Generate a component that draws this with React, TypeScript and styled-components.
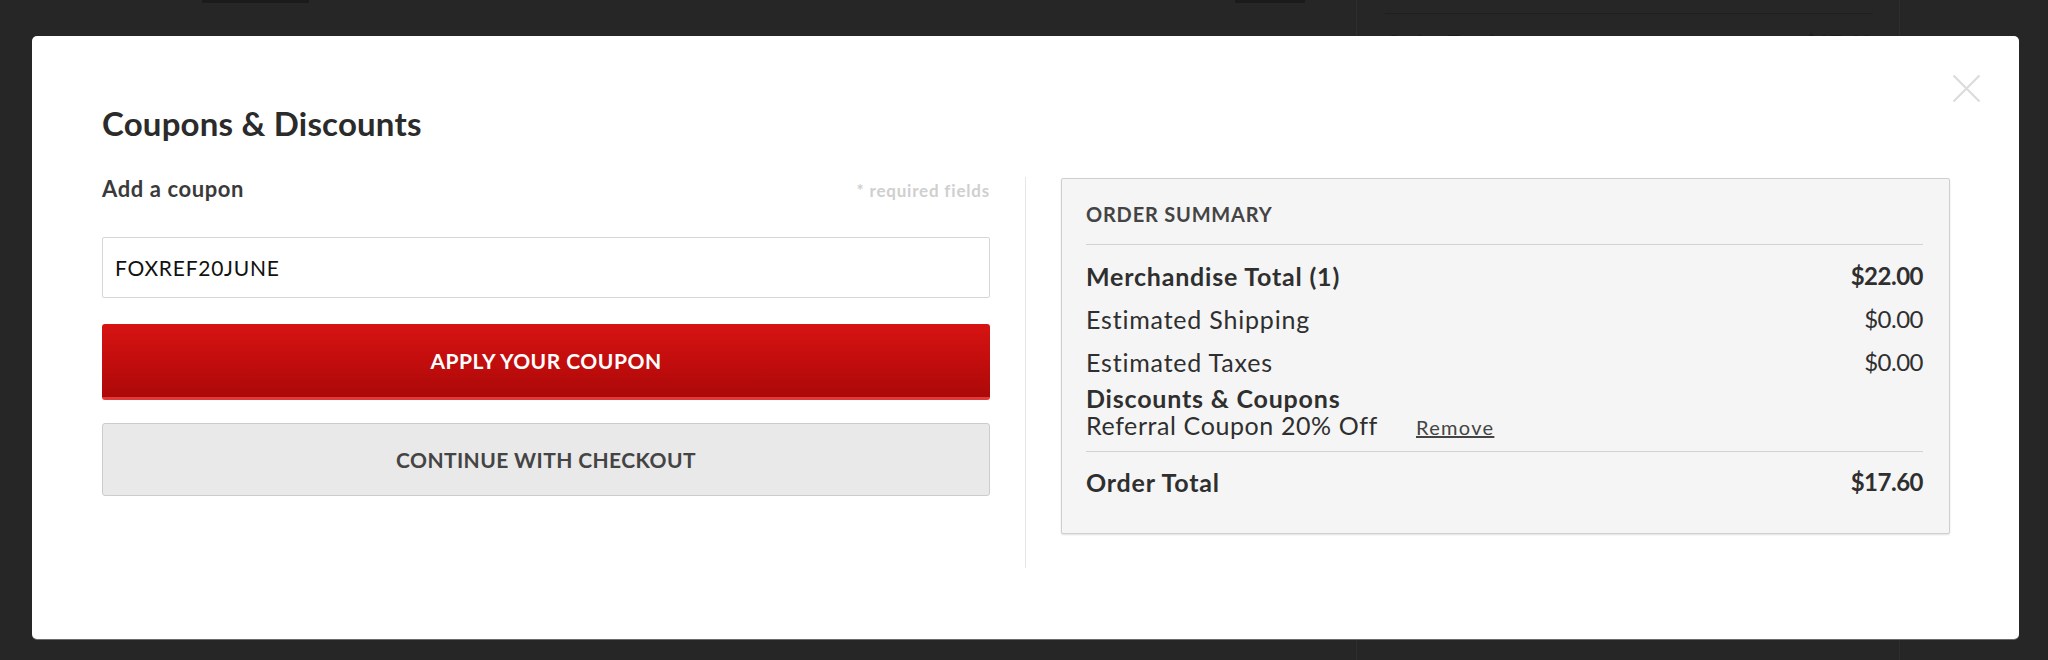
import React from "react";
import styled, { createGlobalStyle } from "styled-components";

const GlobalStyle = createGlobalStyle`
  html, body {
    margin: 0;
    padding: 0;
    background: #262626;
    font-family: Lato, "Open Sans", Arial, sans-serif;
    overflow: hidden;
  }
  * { box-sizing: border-box; }
`;

/* ---------- faded page behind the overlay ---------- */
const Page = styled.div`
  position: relative;
  height: 660px;
  display: flex;
  background: #262626;
`;

const PageMain = styled.div`
  width: 1356px;
  display: flex;
  gap: 926px;
  padding-left: 202px;
`;

const PageBar = styled.div<{ $w: number }>`
  width: ${(p) => p.$w}px;
  height: 3px;
  background: #1b1b1b;
`;

const PageSide = styled.div`
  width: 544px;
  border-left: 1px solid #2e2e2e;
  border-right: 1px solid #2e2e2e;
  padding: 13px 26px 0 28px;
`;

const PageRule = styled.div`
  height: 1px;
  background: #1f1f1f;
`;

const PageRow = styled.div`
  display: flex;
  justify-content: space-between;
  margin-top: 16px;
  color: #1c1c1c;
  font-weight: 700;
  font-size: 22px;
`;

/* ---------- modal ---------- */
const Modal = styled.div`
  position: absolute;
  top: 36px;
  left: 32px;
  width: 1987px;
  height: 603px;
  background: #ffffff;
  border-radius: 5px;
  box-shadow: 0 1px 0 #6a6a6a;
  padding: 69px 70px 0 70px;
  color: #333333;
`;

const CloseButton = styled.button`
  position: absolute;
  top: 38px;
  right: 38px;
  width: 29px;
  height: 29px;
  padding: 0;
  border: 0;
  background: transparent;
  cursor: pointer;
  display: flex;
  align-items: center;
  justify-content: center;
`;

const Title = styled.h2`
  margin: 0;
  font-size: 33px;
  line-height: 36px;
  letter-spacing: 0.2px;
  font-weight: 700;
  color: #2b2b2b;
`;

const Body = styled.div`
  margin-top: 36px;
  display: grid;
  grid-template-columns: 888px 1px 889px;
  column-gap: 35px;
  min-height: 391px;
  align-items: start;
`;

const Divider = styled.div`
  align-self: stretch;
  background: #e6e6e6;
`;

const LeftCol = styled.div`
  display: flex;
  flex-direction: column;
`;

const LabelRow = styled.div`
  display: flex;
  justify-content: space-between;
  align-items: baseline;
  height: 24px;
`;

const Label = styled.label`
  font-size: 22px;
  line-height: 24px;
  letter-spacing: 0.6px;
  font-weight: 700;
  color: #3a3a3a;
`;

const Required = styled.span`
  font-size: 17px;
  letter-spacing: 0.8px;
  font-weight: 700;
  color: #cfcfcf;
`;

const Input = styled.input`
  margin-top: 36px;
  height: 61px;
  width: 100%;
  border: 1px solid #d6d6d6;
  border-radius: 2px;
  padding: 0 12px;
  font-family: Lato, "Open Sans", sans-serif;
  font-size: 21px;
  letter-spacing: 0.75px;
  color: #111111;
  outline: none;
`;

const Button = styled.button<{ $variant: "primary" | "secondary" }>`
  width: 100%;
  font-family: Lato, "Open Sans", sans-serif;
  font-weight: 700;
  font-size: 21px;
  text-transform: uppercase;
  cursor: pointer;
  border-radius: 3px;
  ${(p) =>
    p.$variant === "primary"
      ? `
    margin-top: 26px;
    height: 76px;
    letter-spacing: 0.5px;
    color: #ffffff;
    border: 0;
    border-bottom: 3px solid #e23a3a;
    background: linear-gradient(to bottom, #d71313 0%, #c30d0d 50%, #ac0909 100%);
  `
      : `
    margin-top: 23px;
    height: 73px;
    letter-spacing: 0.4px;
    color: #444444;
    border: 1px solid #cccccc;
    background: #e9e9e9;
  `}
`;

const SummaryBox = styled.section`
  margin-top: 1px;
  height: 356px;
  background: #f5f5f5;
  border: 1px solid #cfcfcf;
  border-radius: 2px;
  box-shadow: 0 1px 2px rgba(0, 0, 0, 0.12);
  padding: 23px 26px 0 24px;
`;

const SummaryHeader = styled.div`
  font-size: 20px;
  line-height: 24px;
  letter-spacing: 0.8px;
  font-weight: 700;
  color: #444444;
  text-transform: uppercase;
  padding-bottom: 18px;
  border-bottom: 1px solid #d2d2d2;
`;

const Rows = styled.div`
  display: flex;
  flex-direction: column;
  gap: 13px;
  margin-top: 16px;
`;

const Row = styled.div<{ $bold?: boolean }>`
  display: flex;
  justify-content: space-between;
  align-items: center;
  height: 30px;
  font-size: 25px;
  line-height: 30px;
  letter-spacing: 0.8px;
  font-weight: ${(p) => (p.$bold ? 700 : 400)};
  color: #2f2f2f;
`;

const Amount = styled.span`
  font-size: 24px;
  line-height: 30px;
  letter-spacing: -0.5px;
`;

const Discounts = styled.div`
  margin-top: 8px;
  padding-bottom: 12px;
  border-bottom: 1px solid #d2d2d2;
  font-size: 25px;
  line-height: 27px;
  color: #2f2f2f;
`;

const DiscountTitle = styled.div`
  height: 27px;
  font-weight: 700;
  letter-spacing: 0.8px;
`;

const DiscountLine = styled.div`
  display: flex;
  align-items: baseline;
  height: 27px;
  gap: 38px;
  letter-spacing: 0.6px;
`;

const RemoveLink = styled.a`
  font-size: 20px;
  line-height: 27px;
  letter-spacing: 1.3px;
  color: #444444;
  text-decoration: underline;
  cursor: pointer;
`;

const TotalRow = styled(Row)`
  margin-top: 15px;
`;

export default function App() {
  return (
    <>
      <GlobalStyle />
      <Page>
        <PageMain>
          <PageBar $w={107} />
          <PageBar $w={70} />
        </PageMain>
        <PageSide>
          <PageRule />
          <PageRow>
            <span>Order Total</span>
            <span>$17.60</span>
          </PageRow>
        </PageSide>
      </Page>
      <Modal role="dialog" aria-label="Coupons & Discounts">
        <CloseButton aria-label="Close">
          <svg width="29" height="29" viewBox="0 0 29 29">
            <path d="M1.5 1.5 L27.5 27.5 M27.5 1.5 L1.5 27.5" stroke="#dcdcdc" strokeWidth="2.2" fill="none" />
          </svg>
        </CloseButton>
        <Title>Coupons &amp; Discounts</Title>
        <Body>
          <LeftCol>
            <LabelRow>
              <Label htmlFor="coupon">Add a coupon</Label>
              <Required>* required fields</Required>
            </LabelRow>
            <Input id="coupon" defaultValue="FOXREF20JUNE" />
            <Button $variant="primary">Apply your coupon</Button>
            <Button $variant="secondary">Continue with checkout</Button>
          </LeftCol>
          <Divider />
          <SummaryBox>
            <SummaryHeader>Order Summary</SummaryHeader>
            <Rows>
              <Row $bold>
                <span>Merchandise Total (1)</span>
                <Amount>$22.00</Amount>
              </Row>
              <Row>
                <span>Estimated Shipping</span>
                <Amount>$0.00</Amount>
              </Row>
              <Row>
                <span>Estimated Taxes</span>
                <Amount>$0.00</Amount>
              </Row>
            </Rows>
            <Discounts>
              <DiscountTitle>Discounts &amp; Coupons</DiscountTitle>
              <DiscountLine>
                <span>Referral Coupon 20% Off</span>
                <RemoveLink>Remove</RemoveLink>
              </DiscountLine>
            </Discounts>
            <TotalRow $bold>
              <span>Order Total</span>
              <Amount>$17.60</Amount>
            </TotalRow>
          </SummaryBox>
        </Body>
      </Modal>
    </>
  );
}
